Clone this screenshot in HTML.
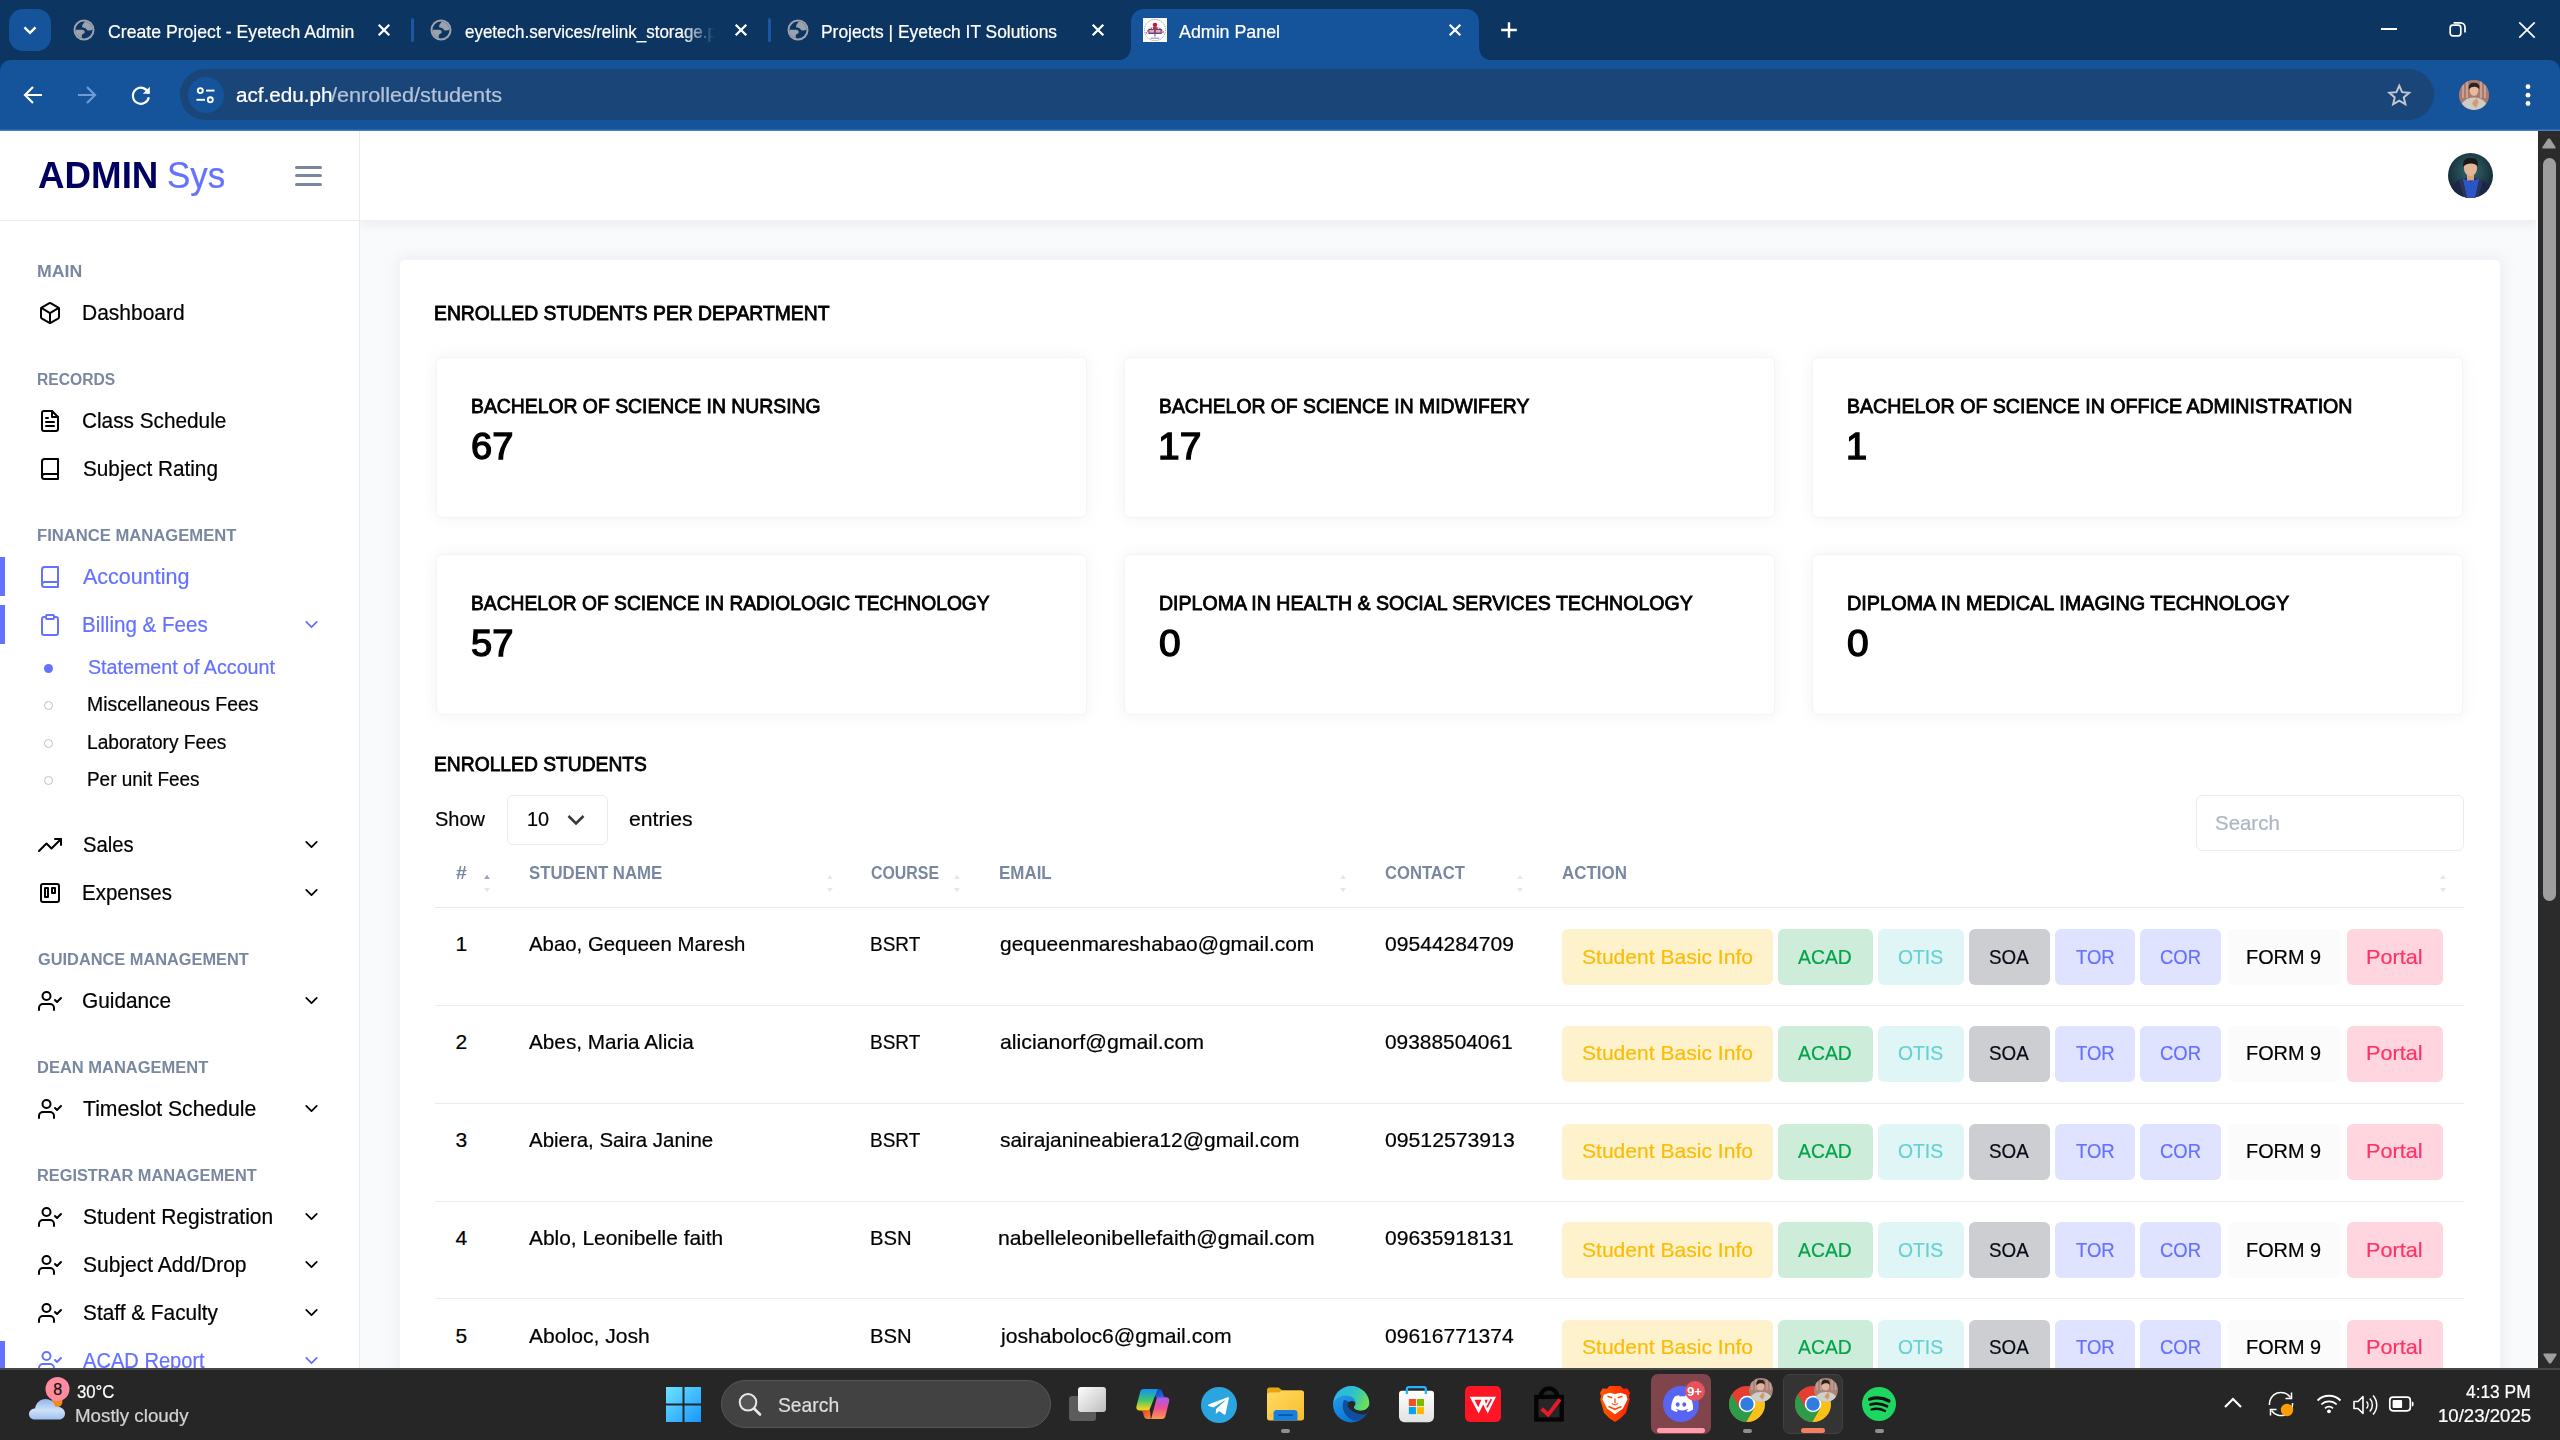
<!DOCTYPE html>
<html lang="en"><head><meta charset="utf-8"><title>Admin Panel</title>
<style>
*{margin:0;padding:0;}
html,body{width:2560px;height:1440px;overflow:hidden;background:#fff;}
body{font-family:"Liberation Sans",sans-serif;position:relative;}
#root{position:absolute;left:0;top:0;width:2560px;height:1440px;overflow:hidden;}
#root div,#root svg,#root span{position:absolute;}
#root section,#root nav,#root header,#root aside,#root footer,#root main{position:absolute;left:0;top:0;width:2560px;height:1440px;pointer-events:none;}
.t{white-space:nowrap;line-height:1;display:block;}
svg{overflow:visible;display:block;}
</style></head>
<body><div id="root">
<main aria-label="page">
<div style="left:360px;top:131px;width:2178px;height:1237px;background:#f9fafb;"></div>
<div style="left:360px;top:131px;width:2178px;height:89px;background:#fff;border-bottom:1px solid #eef0f5;box-shadow:0 3px 10px 0 rgba(183,192,206,.22);"></div>
<svg style="left:2448px;top:153px;" width="45" height="45" viewBox="0 0 45 45" aria-hidden="true"><defs><clipPath id="na"><circle cx="22.500" cy="22.500" r="22.500"/></clipPath><radialGradient id="ng" cx=".5" cy=".4" r=".65"><stop offset="0" stop-color="#356a6c"/><stop offset="1" stop-color="#0d1f2c"/></radialGradient></defs><g clip-path="url(#na)"><rect width="45" height="45" fill="url(#ng)"/><path d="M1 45C2 31 9 25 22.500 25S43 31 44 45Z" fill="#1c2747"/><path d="M14.500 25.500L19 45H27L31.500 25.500L22.500 28.500Z" fill="#2c55c8"/><path d="M14.500 25.500L19 45H16L11 28Z" fill="#2a3558"/><path d="M31.500 25.500L27 45H30L35 28Z" fill="#2a3558"/><rect x="19" y="19" width="7" height="8.500" fill="#d6a288"/><ellipse cx="22.500" cy="15" rx="6.600" ry="8" fill="#e5b59a"/><path d="M15.300 14C14.300 6 19 4.500 23 5.200c4.800-.700 7.700 2.300 6.800 8.800C28.500 10 19 9 15.300 14Z" fill="#19181b"/></g></svg>
<div style="left:398.5px;top:259.2px;width:2102px;height:1200px;background:#fff;border-radius:5px;border:1px solid #f2f4f9;box-shadow:0 0 15px 0 rgba(183,192,206,.25);box-sizing:border-box;"></div>
<span class="t" style="left:434.08px;top:302.00px;font-size:21px;color:#000;transform:scaleX(0.9201);transform-origin:0 50%;-webkit-text-stroke:0.85px #000;">ENROLLED STUDENTS PER DEPARTMENT</span>
<div style="left:435.5px;top:357px;width:651px;height:161.3px;background:#fff;border-radius:6px;border:1px solid #f2f4f9;box-shadow:0 0 15px 0 rgba(183,192,206,.2);box-sizing:border-box;"></div><span class="t" style="left:471.08px;top:395.00px;font-size:21px;color:#000;transform:scaleX(0.9218);transform-origin:0 50%;-webkit-text-stroke:0.85px #000;">BACHELOR OF SCIENCE IN NURSING</span><span class="t" style="left:470.94px;top:429.00px;font-size:36px;color:#000;transform:scaleX(1.0573);transform-origin:0 50%;-webkit-text-stroke:1.3px #000;">67</span>
<div style="left:1123.5px;top:357px;width:651px;height:161.3px;background:#fff;border-radius:6px;border:1px solid #f2f4f9;box-shadow:0 0 15px 0 rgba(183,192,206,.2);box-sizing:border-box;"></div><span class="t" style="left:1159.08px;top:395.00px;font-size:21px;color:#000;transform:scaleX(0.9208);transform-origin:0 50%;-webkit-text-stroke:0.85px #000;">BACHELOR OF SCIENCE IN MIDWIFERY</span><span class="t" style="left:1157.84px;top:429.00px;font-size:36px;color:#000;transform:scaleX(1.0805);transform-origin:0 50%;-webkit-text-stroke:1.3px #000;">17</span>
<div style="left:1811.5px;top:357px;width:651px;height:161.3px;background:#fff;border-radius:6px;border:1px solid #f2f4f9;box-shadow:0 0 15px 0 rgba(183,192,206,.2);box-sizing:border-box;"></div><span class="t" style="left:1847.07px;top:395.00px;font-size:21px;color:#000;transform:scaleX(0.9323);transform-origin:0 50%;-webkit-text-stroke:0.85px #000;">BACHELOR OF SCIENCE IN OFFICE ADMINISTRATION</span><span class="t" style="left:1845.88px;top:429.00px;font-size:36px;color:#000;transform:scaleX(1.0588);transform-origin:0 50%;-webkit-text-stroke:1.3px #000;">1</span>
<div style="left:435.5px;top:554px;width:651px;height:161.3px;background:#fff;border-radius:6px;border:1px solid #f2f4f9;box-shadow:0 0 15px 0 rgba(183,192,206,.2);box-sizing:border-box;"></div><span class="t" style="left:471.08px;top:592.00px;font-size:21px;color:#000;transform:scaleX(0.9151);transform-origin:0 50%;-webkit-text-stroke:0.85px #000;">BACHELOR OF SCIENCE IN RADIOLOGIC TECHNOLOGY</span><span class="t" style="left:470.94px;top:626.00px;font-size:36px;color:#000;transform:scaleX(1.0573);transform-origin:0 50%;-webkit-text-stroke:1.3px #000;">57</span>
<div style="left:1123.5px;top:554px;width:651px;height:161.3px;background:#fff;border-radius:6px;border:1px solid #f2f4f9;box-shadow:0 0 15px 0 rgba(183,192,206,.2);box-sizing:border-box;"></div><span class="t" style="left:1159.07px;top:592.00px;font-size:21px;color:#000;transform:scaleX(0.9309);transform-origin:0 50%;-webkit-text-stroke:0.85px #000;">DIPLOMA IN HEALTH &amp; SOCIAL SERVICES TECHNOLOGY</span><span class="t" style="left:1158.92px;top:626.00px;font-size:36px;color:#000;transform:scaleX(1.0833);transform-origin:0 50%;-webkit-text-stroke:1.3px #000;">0</span>
<div style="left:1811.5px;top:554px;width:651px;height:161.3px;background:#fff;border-radius:6px;border:1px solid #f2f4f9;box-shadow:0 0 15px 0 rgba(183,192,206,.2);box-sizing:border-box;"></div><span class="t" style="left:1847.05px;top:592.00px;font-size:21px;color:#000;transform:scaleX(0.9452);transform-origin:0 50%;-webkit-text-stroke:0.85px #000;">DIPLOMA IN MEDICAL IMAGING TECHNOLOGY</span><span class="t" style="left:1846.92px;top:626.00px;font-size:36px;color:#000;transform:scaleX(1.0833);transform-origin:0 50%;-webkit-text-stroke:1.3px #000;">0</span>
<span class="t" style="left:434.08px;top:753.00px;font-size:21px;color:#000;transform:scaleX(0.9169);transform-origin:0 50%;-webkit-text-stroke:0.85px #000;">ENROLLED STUDENTS</span>
<span class="t" style="left:435.00px;top:808.00px;font-size:21px;color:#000;transform:scaleX(0.9510);transform-origin:0 50%;-webkit-text-stroke:0.22px #000;">Show</span>
<div style="left:507.2px;top:795px;width:100.5px;height:49.8px;background:#fff;border:1px solid #e9ecef;border-radius:6px;box-sizing:border-box;"></div>
<span class="t" style="left:526.55px;top:808.00px;font-size:21px;color:#000;transform:scaleX(0.9456);transform-origin:0 50%;-webkit-text-stroke:0.22px #000;">10</span>
<svg style="left:564px;top:808px;" width="24" height="24" viewBox="0 0 24 24" aria-hidden="true"><path d="M4.500 8L12 15.500L19.500 8" fill="none" stroke="#343a40" stroke-width="2.600"/></svg>
<span class="t" style="left:628.75px;top:808.00px;font-size:21px;color:#000;transform:scaleX(1.0075);transform-origin:0 50%;-webkit-text-stroke:0.22px #000;">entries</span>
<div style="left:2195.5px;top:795.3px;width:268.5px;height:55.3px;background:#fff;border:1px solid #e9ecef;border-radius:6px;box-sizing:border-box;"></div>
<span class="t" style="left:2215.30px;top:812.00px;font-size:21px;color:#aeb6c6;transform:scaleX(0.9733);transform-origin:0 50%;-webkit-text-stroke:0.22px #aeb6c6;">Search</span>
<span class="t" style="left:455.50px;top:864.00px;font-size:18px;color:#7987a1;font-weight:700;transform:scaleX(1.0800);transform-origin:0 50%;">#</span>
<span class="t" style="left:528.75px;top:864.00px;font-size:18px;color:#7987a1;font-weight:700;transform:scaleX(0.9319);transform-origin:0 50%;">STUDENT NAME</span>
<span class="t" style="left:871.25px;top:864.00px;font-size:18px;color:#7987a1;font-weight:700;transform:scaleX(0.8831);transform-origin:0 50%;">COURSE</span>
<span class="t" style="left:998.56px;top:864.00px;font-size:18px;color:#7987a1;font-weight:700;transform:scaleX(0.9409);transform-origin:0 50%;">EMAIL</span>
<span class="t" style="left:1385.00px;top:864.00px;font-size:18px;color:#7987a1;font-weight:700;transform:scaleX(0.9232);transform-origin:0 50%;">CONTACT</span>
<span class="t" style="left:1562.00px;top:864.00px;font-size:18px;color:#7987a1;font-weight:700;transform:scaleX(0.9412);transform-origin:0 50%;">ACTION</span>
<svg style="left:482.75px;top:873px;" width="8" height="22" viewBox="0 0 8 22" aria-hidden="true"><path d="M4 1.800L6.900 6H1.100Z" fill="#9aa5b9"/><path d="M4 19.200L6.900 15H1.100Z" fill="#e3e7ee"/></svg>
<svg style="left:825.5px;top:873px;" width="8" height="22" viewBox="0 0 8 22" aria-hidden="true"><path d="M4 1.800L6.900 6H1.100Z" fill="#e3e7ee"/><path d="M4 19.200L6.900 15H1.100Z" fill="#e3e7ee"/></svg>
<svg style="left:952.75px;top:873px;" width="8" height="22" viewBox="0 0 8 22" aria-hidden="true"><path d="M4 1.800L6.900 6H1.100Z" fill="#e3e7ee"/><path d="M4 19.200L6.900 15H1.100Z" fill="#e3e7ee"/></svg>
<svg style="left:1338.5px;top:873px;" width="8" height="22" viewBox="0 0 8 22" aria-hidden="true"><path d="M4 1.800L6.900 6H1.100Z" fill="#e3e7ee"/><path d="M4 19.200L6.900 15H1.100Z" fill="#e3e7ee"/></svg>
<svg style="left:1515.5px;top:873px;" width="8" height="22" viewBox="0 0 8 22" aria-hidden="true"><path d="M4 1.800L6.900 6H1.100Z" fill="#e3e7ee"/><path d="M4 19.200L6.900 15H1.100Z" fill="#e3e7ee"/></svg>
<svg style="left:2438.8px;top:873px;" width="8" height="22" viewBox="0 0 8 22" aria-hidden="true"><path d="M4 1.800L6.900 6H1.100Z" fill="#e3e7ee"/><path d="M4 19.200L6.900 15H1.100Z" fill="#e3e7ee"/></svg>
<div style="left:435px;top:906.6px;width:2029px;height:1.5px;background:#e6e9ee;"></div>
<span class="t" style="left:455.50px;top:933.00px;font-size:21px;color:#000;-webkit-text-stroke:0.22px #000;">1</span>
<span class="t" style="left:528.75px;top:933.00px;font-size:21px;color:#000;transform:scaleX(0.9705);transform-origin:0 50%;-webkit-text-stroke:0.22px #000;">Abao, Gequeen Maresh</span>
<span class="t" style="left:870.35px;top:933.00px;font-size:21px;color:#000;transform:scaleX(0.9033);transform-origin:0 50%;-webkit-text-stroke:0.22px #000;">BSRT</span>
<span class="t" style="left:999.50px;top:933.00px;font-size:21px;color:#000;transform:scaleX(0.9960);transform-origin:0 50%;-webkit-text-stroke:0.22px #000;">gequeenmareshabao@gmail.com</span>
<span class="t" style="left:1385.00px;top:933.00px;font-size:21px;color:#000;transform:scaleX(1.0036);transform-origin:0 50%;-webkit-text-stroke:0.22px #000;">09544284709</span>
<div style="left:1562px;top:929.2px;width:210.8px;height:55.5px;background:#fef2cd;border-radius:6px;"></div>
<span class="t" style="left:1581.60px;top:946.00px;font-size:21px;color:#fbbc06;transform:scaleX(1.0032);transform-origin:0 50%;-webkit-text-stroke:0.22px #fbbc06;">Student Basic Info</span>
<div style="left:1778px;top:929.2px;width:94.7px;height:55.5px;background:#cdedda;border-radius:6px;"></div>
<span class="t" style="left:1798.40px;top:946.00px;font-size:21px;color:#05a34a;transform:scaleX(0.9213);transform-origin:0 50%;-webkit-text-stroke:0.22px #05a34a;">ACAD</span>
<div style="left:1878px;top:929.2px;width:85.7px;height:55.5px;background:#e0f6f6;border-radius:6px;"></div>
<span class="t" style="left:1898.08px;top:946.00px;font-size:21px;color:#66d1d1;transform:scaleX(0.9209);transform-origin:0 50%;-webkit-text-stroke:0.22px #66d1d1;">OTIS</span>
<div style="left:1969px;top:929.2px;width:80.9px;height:55.5px;background:#cdced1;border-radius:6px;"></div>
<span class="t" style="left:1989.30px;top:946.00px;font-size:21px;color:#060c17;transform:scaleX(0.8953);transform-origin:0 50%;-webkit-text-stroke:0.22px #060c17;">SOA</span>
<div style="left:2055px;top:929.2px;width:80px;height:55.5px;background:#e0e3ff;border-radius:6px;"></div>
<span class="t" style="left:2075.70px;top:946.00px;font-size:21px;color:#6571ff;transform:scaleX(0.8816);transform-origin:0 50%;-webkit-text-stroke:0.22px #6571ff;">TOR</span>
<div style="left:2140px;top:929.2px;width:81px;height:55.5px;background:#e0e3ff;border-radius:6px;"></div>
<span class="t" style="left:2160.12px;top:946.00px;font-size:21px;color:#6571ff;transform:scaleX(0.8791);transform-origin:0 50%;-webkit-text-stroke:0.22px #6571ff;">COR</span>
<div style="left:2226.6px;top:929.2px;width:114.6px;height:55.5px;background:#fbfbfc;border-radius:6px;"></div>
<span class="t" style="left:2246.05px;top:946.00px;font-size:21px;color:#000;transform:scaleX(0.9465);transform-origin:0 50%;-webkit-text-stroke:0.22px #000;">FORM 9</span>
<div style="left:2346.9px;top:929.2px;width:96.1px;height:55.5px;background:#ffd6e0;border-radius:6px;"></div>
<span class="t" style="left:2366.17px;top:946.00px;font-size:21px;color:#ff3366;transform:scaleX(1.0302);transform-origin:0 50%;-webkit-text-stroke:0.22px #ff3366;">Portal</span>
<div style="left:435px;top:1004.8px;width:2029px;height:1.3px;background:#e9ecef;"></div>
<span class="t" style="left:455.50px;top:1031.00px;font-size:21px;color:#000;-webkit-text-stroke:0.22px #000;">2</span>
<span class="t" style="left:528.75px;top:1031.00px;font-size:21px;color:#000;transform:scaleX(0.9873);transform-origin:0 50%;-webkit-text-stroke:0.22px #000;">Abes, Maria Alicia</span>
<span class="t" style="left:870.35px;top:1031.00px;font-size:21px;color:#000;transform:scaleX(0.9033);transform-origin:0 50%;-webkit-text-stroke:0.22px #000;">BSRT</span>
<span class="t" style="left:999.50px;top:1031.00px;font-size:21px;color:#000;transform:scaleX(1.0147);transform-origin:0 50%;-webkit-text-stroke:0.22px #000;">alicianorf@gmail.com</span>
<span class="t" style="left:1385.00px;top:1031.00px;font-size:21px;color:#000;transform:scaleX(0.9938);transform-origin:0 50%;-webkit-text-stroke:0.22px #000;">09388504061</span>
<div style="left:1562px;top:1026.1px;width:210.8px;height:55.5px;background:#fef2cd;border-radius:6px;"></div>
<span class="t" style="left:1581.60px;top:1042.00px;font-size:21px;color:#fbbc06;transform:scaleX(1.0032);transform-origin:0 50%;-webkit-text-stroke:0.22px #fbbc06;">Student Basic Info</span>
<div style="left:1778px;top:1026.1px;width:94.7px;height:55.5px;background:#cdedda;border-radius:6px;"></div>
<span class="t" style="left:1798.40px;top:1042.00px;font-size:21px;color:#05a34a;transform:scaleX(0.9213);transform-origin:0 50%;-webkit-text-stroke:0.22px #05a34a;">ACAD</span>
<div style="left:1878px;top:1026.1px;width:85.7px;height:55.5px;background:#e0f6f6;border-radius:6px;"></div>
<span class="t" style="left:1898.08px;top:1042.00px;font-size:21px;color:#66d1d1;transform:scaleX(0.9209);transform-origin:0 50%;-webkit-text-stroke:0.22px #66d1d1;">OTIS</span>
<div style="left:1969px;top:1026.1px;width:80.9px;height:55.5px;background:#cdced1;border-radius:6px;"></div>
<span class="t" style="left:1989.30px;top:1042.00px;font-size:21px;color:#060c17;transform:scaleX(0.8953);transform-origin:0 50%;-webkit-text-stroke:0.22px #060c17;">SOA</span>
<div style="left:2055px;top:1026.1px;width:80px;height:55.5px;background:#e0e3ff;border-radius:6px;"></div>
<span class="t" style="left:2075.70px;top:1042.00px;font-size:21px;color:#6571ff;transform:scaleX(0.8816);transform-origin:0 50%;-webkit-text-stroke:0.22px #6571ff;">TOR</span>
<div style="left:2140px;top:1026.1px;width:81px;height:55.5px;background:#e0e3ff;border-radius:6px;"></div>
<span class="t" style="left:2160.12px;top:1042.00px;font-size:21px;color:#6571ff;transform:scaleX(0.8791);transform-origin:0 50%;-webkit-text-stroke:0.22px #6571ff;">COR</span>
<div style="left:2226.6px;top:1026.1px;width:114.6px;height:55.5px;background:#fbfbfc;border-radius:6px;"></div>
<span class="t" style="left:2246.05px;top:1042.00px;font-size:21px;color:#000;transform:scaleX(0.9465);transform-origin:0 50%;-webkit-text-stroke:0.22px #000;">FORM 9</span>
<div style="left:2346.9px;top:1026.1px;width:96.1px;height:55.5px;background:#ffd6e0;border-radius:6px;"></div>
<span class="t" style="left:2366.17px;top:1042.00px;font-size:21px;color:#ff3366;transform:scaleX(1.0302);transform-origin:0 50%;-webkit-text-stroke:0.22px #ff3366;">Portal</span>
<div style="left:435px;top:1102.6px;width:2029px;height:1.3px;background:#e9ecef;"></div>
<span class="t" style="left:455.50px;top:1129.00px;font-size:21px;color:#000;-webkit-text-stroke:0.22px #000;">3</span>
<span class="t" style="left:528.75px;top:1129.00px;font-size:21px;color:#000;transform:scaleX(0.9736);transform-origin:0 50%;-webkit-text-stroke:0.22px #000;">Abiera, Saira Janine</span>
<span class="t" style="left:870.35px;top:1129.00px;font-size:21px;color:#000;transform:scaleX(0.9033);transform-origin:0 50%;-webkit-text-stroke:0.22px #000;">BSRT</span>
<span class="t" style="left:999.50px;top:1129.00px;font-size:21px;color:#000;transform:scaleX(0.9970);transform-origin:0 50%;-webkit-text-stroke:0.22px #000;">sairajanineabiera12@gmail.com</span>
<span class="t" style="left:1385.00px;top:1129.00px;font-size:21px;color:#000;transform:scaleX(1.0095);transform-origin:0 50%;-webkit-text-stroke:0.22px #000;">09512573913</span>
<div style="left:1562px;top:1124.1px;width:210.8px;height:55.5px;background:#fef2cd;border-radius:6px;"></div>
<span class="t" style="left:1581.60px;top:1140.00px;font-size:21px;color:#fbbc06;transform:scaleX(1.0032);transform-origin:0 50%;-webkit-text-stroke:0.22px #fbbc06;">Student Basic Info</span>
<div style="left:1778px;top:1124.1px;width:94.7px;height:55.5px;background:#cdedda;border-radius:6px;"></div>
<span class="t" style="left:1798.40px;top:1140.00px;font-size:21px;color:#05a34a;transform:scaleX(0.9213);transform-origin:0 50%;-webkit-text-stroke:0.22px #05a34a;">ACAD</span>
<div style="left:1878px;top:1124.1px;width:85.7px;height:55.5px;background:#e0f6f6;border-radius:6px;"></div>
<span class="t" style="left:1898.08px;top:1140.00px;font-size:21px;color:#66d1d1;transform:scaleX(0.9209);transform-origin:0 50%;-webkit-text-stroke:0.22px #66d1d1;">OTIS</span>
<div style="left:1969px;top:1124.1px;width:80.9px;height:55.5px;background:#cdced1;border-radius:6px;"></div>
<span class="t" style="left:1989.30px;top:1140.00px;font-size:21px;color:#060c17;transform:scaleX(0.8953);transform-origin:0 50%;-webkit-text-stroke:0.22px #060c17;">SOA</span>
<div style="left:2055px;top:1124.1px;width:80px;height:55.5px;background:#e0e3ff;border-radius:6px;"></div>
<span class="t" style="left:2075.70px;top:1140.00px;font-size:21px;color:#6571ff;transform:scaleX(0.8816);transform-origin:0 50%;-webkit-text-stroke:0.22px #6571ff;">TOR</span>
<div style="left:2140px;top:1124.1px;width:81px;height:55.5px;background:#e0e3ff;border-radius:6px;"></div>
<span class="t" style="left:2160.12px;top:1140.00px;font-size:21px;color:#6571ff;transform:scaleX(0.8791);transform-origin:0 50%;-webkit-text-stroke:0.22px #6571ff;">COR</span>
<div style="left:2226.6px;top:1124.1px;width:114.6px;height:55.5px;background:#fbfbfc;border-radius:6px;"></div>
<span class="t" style="left:2246.05px;top:1140.00px;font-size:21px;color:#000;transform:scaleX(0.9465);transform-origin:0 50%;-webkit-text-stroke:0.22px #000;">FORM 9</span>
<div style="left:2346.9px;top:1124.1px;width:96.1px;height:55.5px;background:#ffd6e0;border-radius:6px;"></div>
<span class="t" style="left:2366.17px;top:1140.00px;font-size:21px;color:#ff3366;transform:scaleX(1.0302);transform-origin:0 50%;-webkit-text-stroke:0.22px #ff3366;">Portal</span>
<div style="left:435px;top:1200.7px;width:2029px;height:1.3px;background:#e9ecef;"></div>
<span class="t" style="left:455.50px;top:1227.00px;font-size:21px;color:#000;-webkit-text-stroke:0.22px #000;">4</span>
<span class="t" style="left:528.75px;top:1227.00px;font-size:21px;color:#000;transform:scaleX(0.9959);transform-origin:0 50%;-webkit-text-stroke:0.22px #000;">Ablo, Leonibelle faith</span>
<span class="t" style="left:870.29px;top:1227.00px;font-size:21px;color:#000;transform:scaleX(0.9643);transform-origin:0 50%;-webkit-text-stroke:0.22px #000;">BSN</span>
<span class="t" style="left:998.49px;top:1227.00px;font-size:21px;color:#000;transform:scaleX(1.0110);transform-origin:0 50%;-webkit-text-stroke:0.22px #000;">nabelleleonibellefaith@gmail.com</span>
<span class="t" style="left:1385.00px;top:1227.00px;font-size:21px;color:#000;transform:scaleX(1.0016);transform-origin:0 50%;-webkit-text-stroke:0.22px #000;">09635918131</span>
<div style="left:1562px;top:1222.2px;width:210.8px;height:55.5px;background:#fef2cd;border-radius:6px;"></div>
<span class="t" style="left:1581.60px;top:1239.00px;font-size:21px;color:#fbbc06;transform:scaleX(1.0032);transform-origin:0 50%;-webkit-text-stroke:0.22px #fbbc06;">Student Basic Info</span>
<div style="left:1778px;top:1222.2px;width:94.7px;height:55.5px;background:#cdedda;border-radius:6px;"></div>
<span class="t" style="left:1798.40px;top:1239.00px;font-size:21px;color:#05a34a;transform:scaleX(0.9213);transform-origin:0 50%;-webkit-text-stroke:0.22px #05a34a;">ACAD</span>
<div style="left:1878px;top:1222.2px;width:85.7px;height:55.5px;background:#e0f6f6;border-radius:6px;"></div>
<span class="t" style="left:1898.08px;top:1239.00px;font-size:21px;color:#66d1d1;transform:scaleX(0.9209);transform-origin:0 50%;-webkit-text-stroke:0.22px #66d1d1;">OTIS</span>
<div style="left:1969px;top:1222.2px;width:80.9px;height:55.5px;background:#cdced1;border-radius:6px;"></div>
<span class="t" style="left:1989.30px;top:1239.00px;font-size:21px;color:#060c17;transform:scaleX(0.8953);transform-origin:0 50%;-webkit-text-stroke:0.22px #060c17;">SOA</span>
<div style="left:2055px;top:1222.2px;width:80px;height:55.5px;background:#e0e3ff;border-radius:6px;"></div>
<span class="t" style="left:2075.70px;top:1239.00px;font-size:21px;color:#6571ff;transform:scaleX(0.8816);transform-origin:0 50%;-webkit-text-stroke:0.22px #6571ff;">TOR</span>
<div style="left:2140px;top:1222.2px;width:81px;height:55.5px;background:#e0e3ff;border-radius:6px;"></div>
<span class="t" style="left:2160.12px;top:1239.00px;font-size:21px;color:#6571ff;transform:scaleX(0.8791);transform-origin:0 50%;-webkit-text-stroke:0.22px #6571ff;">COR</span>
<div style="left:2226.6px;top:1222.2px;width:114.6px;height:55.5px;background:#fbfbfc;border-radius:6px;"></div>
<span class="t" style="left:2246.05px;top:1239.00px;font-size:21px;color:#000;transform:scaleX(0.9465);transform-origin:0 50%;-webkit-text-stroke:0.22px #000;">FORM 9</span>
<div style="left:2346.9px;top:1222.2px;width:96.1px;height:55.5px;background:#ffd6e0;border-radius:6px;"></div>
<span class="t" style="left:2366.17px;top:1239.00px;font-size:21px;color:#ff3366;transform:scaleX(1.0302);transform-origin:0 50%;-webkit-text-stroke:0.22px #ff3366;">Portal</span>
<div style="left:435px;top:1298.0px;width:2029px;height:1.3px;background:#e9ecef;"></div>
<span class="t" style="left:455.50px;top:1325.00px;font-size:21px;color:#000;-webkit-text-stroke:0.22px #000;">5</span>
<span class="t" style="left:528.75px;top:1325.00px;font-size:21px;color:#000;transform:scaleX(1.0037);transform-origin:0 50%;-webkit-text-stroke:0.22px #000;">Aboloc, Josh</span>
<span class="t" style="left:870.29px;top:1325.00px;font-size:21px;color:#000;transform:scaleX(0.9643);transform-origin:0 50%;-webkit-text-stroke:0.22px #000;">BSN</span>
<span class="t" style="left:1000.51px;top:1325.00px;font-size:21px;color:#000;transform:scaleX(1.0065);transform-origin:0 50%;-webkit-text-stroke:0.22px #000;">joshaboloc6@gmail.com</span>
<span class="t" style="left:1385.00px;top:1325.00px;font-size:21px;color:#000;transform:scaleX(1.0016);transform-origin:0 50%;-webkit-text-stroke:0.22px #000;">09616771374</span>
<div style="left:1562px;top:1320.1px;width:210.8px;height:55.5px;background:#fef2cd;border-radius:6px;"></div>
<span class="t" style="left:1581.60px;top:1336.00px;font-size:21px;color:#fbbc06;transform:scaleX(1.0032);transform-origin:0 50%;-webkit-text-stroke:0.22px #fbbc06;">Student Basic Info</span>
<div style="left:1778px;top:1320.1px;width:94.7px;height:55.5px;background:#cdedda;border-radius:6px;"></div>
<span class="t" style="left:1798.40px;top:1336.00px;font-size:21px;color:#05a34a;transform:scaleX(0.9213);transform-origin:0 50%;-webkit-text-stroke:0.22px #05a34a;">ACAD</span>
<div style="left:1878px;top:1320.1px;width:85.7px;height:55.5px;background:#e0f6f6;border-radius:6px;"></div>
<span class="t" style="left:1898.08px;top:1336.00px;font-size:21px;color:#66d1d1;transform:scaleX(0.9209);transform-origin:0 50%;-webkit-text-stroke:0.22px #66d1d1;">OTIS</span>
<div style="left:1969px;top:1320.1px;width:80.9px;height:55.5px;background:#cdced1;border-radius:6px;"></div>
<span class="t" style="left:1989.30px;top:1336.00px;font-size:21px;color:#060c17;transform:scaleX(0.8953);transform-origin:0 50%;-webkit-text-stroke:0.22px #060c17;">SOA</span>
<div style="left:2055px;top:1320.1px;width:80px;height:55.5px;background:#e0e3ff;border-radius:6px;"></div>
<span class="t" style="left:2075.70px;top:1336.00px;font-size:21px;color:#6571ff;transform:scaleX(0.8816);transform-origin:0 50%;-webkit-text-stroke:0.22px #6571ff;">TOR</span>
<div style="left:2140px;top:1320.1px;width:81px;height:55.5px;background:#e0e3ff;border-radius:6px;"></div>
<span class="t" style="left:2160.12px;top:1336.00px;font-size:21px;color:#6571ff;transform:scaleX(0.8791);transform-origin:0 50%;-webkit-text-stroke:0.22px #6571ff;">COR</span>
<div style="left:2226.6px;top:1320.1px;width:114.6px;height:55.5px;background:#fbfbfc;border-radius:6px;"></div>
<span class="t" style="left:2246.05px;top:1336.00px;font-size:21px;color:#000;transform:scaleX(0.9465);transform-origin:0 50%;-webkit-text-stroke:0.22px #000;">FORM 9</span>
<div style="left:2346.9px;top:1320.1px;width:96.1px;height:55.5px;background:#ffd6e0;border-radius:6px;"></div>
<span class="t" style="left:2366.17px;top:1336.00px;font-size:21px;color:#ff3366;transform:scaleX(1.0302);transform-origin:0 50%;-webkit-text-stroke:0.22px #ff3366;">Portal</span>
</main>
<aside aria-label="sidebar">
<div style="left:0px;top:131px;width:359px;height:1237px;background:#fff;border-right:1px solid #e9ecef;"></div>
<div style="left:0px;top:220px;width:359px;height:1px;background:#e9ecef;"></div>
<span class="t" style="left:37.50px;top:158.00px;font-size:36.5px;color:#01005f;font-weight:700;transform:scaleX(1.0063);transform-origin:0 50%;">ADMIN</span>
<span class="t" style="left:167.04px;top:158.00px;font-size:36.5px;color:#6571ff;transform:scaleX(0.9591);transform-origin:0 50%;-webkit-text-stroke:0.22px #6571ff;">Sys</span>
<div style="left:295px;top:165.5px;width:27px;height:3px;background:#7987a1;border-radius:2px;"></div>
<div style="left:295px;top:174.3px;width:27px;height:3px;background:#7987a1;border-radius:2px;"></div>
<div style="left:295px;top:183px;width:27px;height:3px;background:#7987a1;border-radius:2px;"></div>
<span class="t" style="left:36.89px;top:264.00px;font-size:16px;color:#7987a1;font-weight:700;transform:scaleX(1.1061);transform-origin:0 50%;">MAIN</span>
<svg style="left:37.5px;top:301px;" width="24" height="24" viewBox="0 0 24 24" aria-hidden="true"><g fill="none" stroke="#000" stroke-width="2" stroke-linecap="round" stroke-linejoin="round"><path d="M21 16V8a2 2 0 0 0-1-1.730l-7-4a2 2 0 0 0-2 0l-7 4A2 2 0 0 0 3 8v8a2 2 0 0 0 1 1.730l7 4a2 2 0 0 0 2 0l7-4A2 2 0 0 0 21 16z"/><polyline points="3.270 6.960 12 12.010 20.730 6.960"/><line x1="12" y1="22.080" x2="12" y2="12"/></g></svg><span class="t" style="left:81.82px;top:303.00px;font-size:21.5px;color:#000;transform:scaleX(0.9765);transform-origin:0 50%;-webkit-text-stroke:0.22px #000;">Dashboard</span>
<span class="t" style="left:37.02px;top:372.00px;font-size:16px;color:#7987a1;font-weight:700;transform:scaleX(0.9769);transform-origin:0 50%;">RECORDS</span>
<svg style="left:37.5px;top:409px;" width="24" height="24" viewBox="0 0 24 24" aria-hidden="true"><g fill="none" stroke="#000" stroke-width="2" stroke-linecap="round" stroke-linejoin="round"><path d="M14 2H6a2 2 0 0 0-2 2v16a2 2 0 0 0 2 2h12a2 2 0 0 0 2-2V8z"/><polyline points="14 2 14 8 20 8"/><line x1="16" y1="13" x2="8" y2="13"/><line x1="16" y1="17" x2="8" y2="17"/><polyline points="10 9 9 9 8 9"/></g></svg><span class="t" style="left:81.83px;top:411.00px;font-size:21.5px;color:#000;transform:scaleX(0.9659);transform-origin:0 50%;-webkit-text-stroke:0.22px #000;">Class Schedule</span>
<svg style="left:37.5px;top:457px;" width="24" height="24" viewBox="0 0 24 24" aria-hidden="true"><g fill="none" stroke="#000" stroke-width="2" stroke-linecap="round" stroke-linejoin="round"><path d="M4 19.500A2.500 2.500 0 0 1 6.500 17H20"/><path d="M6.500 2H20v20H6.500A2.500 2.500 0 0 1 4 19.500v-15A2.500 2.500 0 0 1 6.500 2z"/></g></svg><span class="t" style="left:82.80px;top:459.00px;font-size:21.5px;color:#000;transform:scaleX(0.9649);transform-origin:0 50%;-webkit-text-stroke:0.22px #000;">Subject Rating</span>
<span class="t" style="left:36.96px;top:528.00px;font-size:16px;color:#7987a1;font-weight:700;transform:scaleX(1.0386);transform-origin:0 50%;">FINANCE MANAGEMENT</span>
<div style="left:0px;top:556.7px;width:5px;height:39px;background:#6571ff;"></div><svg style="left:37.5px;top:565px;" width="24" height="24" viewBox="0 0 24 24" aria-hidden="true"><g fill="none" stroke="#6571ff" stroke-width="2" stroke-linecap="round" stroke-linejoin="round"><path d="M4 19.500A2.500 2.500 0 0 1 6.500 17H20"/><path d="M6.500 2H20v20H6.500A2.500 2.500 0 0 1 4 19.500v-15A2.500 2.500 0 0 1 6.500 2z"/></g></svg><span class="t" style="left:82.80px;top:567.00px;font-size:21.5px;color:#6571ff;transform:scaleX(1.0008);transform-origin:0 50%;-webkit-text-stroke:0.22px #6571ff;">Accounting</span>
<div style="left:0px;top:604.7px;width:5px;height:39px;background:#6571ff;"></div><svg style="left:37.5px;top:613px;" width="24" height="24" viewBox="0 0 24 24" aria-hidden="true"><g fill="none" stroke="#6571ff" stroke-width="2" stroke-linecap="round" stroke-linejoin="round"><path d="M16 4h2a2 2 0 0 1 2 2v14a2 2 0 0 1-2 2H6a2 2 0 0 1-2-2V6a2 2 0 0 1 2-2h2"/><rect x="8" y="2" width="8" height="4" rx="1" ry="1"/></g></svg><span class="t" style="left:81.84px;top:615.00px;font-size:21.5px;color:#6571ff;transform:scaleX(0.9561);transform-origin:0 50%;-webkit-text-stroke:0.22px #6571ff;">Billing &amp; Fees</span><svg style="left:300.5px;top:613.8px;" width="21" height="21" viewBox="0 0 24 24" aria-hidden="true"><g fill="none" stroke="#6571ff" stroke-width="2" stroke-linecap="round" stroke-linejoin="round"><polyline points="6 9 12 15 18 9"/></g></svg>
<div style="left:44px;top:664px;width:9px;height:9px;background:#6571ff;border-radius:50%;"></div><span class="t" style="left:87.50px;top:658.00px;font-size:19.5px;color:#6571ff;transform:scaleX(1.0084);transform-origin:0 50%;-webkit-text-stroke:0.22px #6571ff;">Statement of Account</span>
<div style="left:44px;top:700.8px;width:9px;height:9px;background:#fff;border-radius:50%;border:1.500px solid #b8c0cf;box-sizing:border-box;"></div><span class="t" style="left:86.51px;top:695.00px;font-size:19.5px;color:#000;transform:scaleX(0.9949);transform-origin:0 50%;-webkit-text-stroke:0.22px #000;">Miscellaneous Fees</span>
<div style="left:44px;top:738.8px;width:9px;height:9px;background:#fff;border-radius:50%;border:1.500px solid #b8c0cf;box-sizing:border-box;"></div><span class="t" style="left:86.52px;top:733.00px;font-size:19.5px;color:#000;transform:scaleX(0.9813);transform-origin:0 50%;-webkit-text-stroke:0.22px #000;">Laboratory Fees</span>
<div style="left:44px;top:775.8px;width:9px;height:9px;background:#fff;border-radius:50%;border:1.500px solid #b8c0cf;box-sizing:border-box;"></div><span class="t" style="left:86.53px;top:770.00px;font-size:19.5px;color:#000;transform:scaleX(0.9703);transform-origin:0 50%;-webkit-text-stroke:0.22px #000;">Per unit Fees</span>
<svg style="left:37.5px;top:833px;" width="24" height="24" viewBox="0 0 24 24" aria-hidden="true"><g fill="none" stroke="#000" stroke-width="2" stroke-linecap="round" stroke-linejoin="round"><polyline points="23 6 13.500 15.500 8.500 10.500 1 18"/><polyline points="17 6 23 6 23 12"/></g></svg><span class="t" style="left:82.80px;top:835.00px;font-size:21.5px;color:#000;transform:scaleX(0.9428);transform-origin:0 50%;-webkit-text-stroke:0.22px #000;">Sales</span><svg style="left:300.5px;top:833.8px;" width="21" height="21" viewBox="0 0 24 24" aria-hidden="true"><g fill="none" stroke="#000" stroke-width="2" stroke-linecap="round" stroke-linejoin="round"><polyline points="6 9 12 15 18 9"/></g></svg>
<svg style="left:37.5px;top:881px;" width="24" height="24" viewBox="0 0 24 24" aria-hidden="true"><g fill="none" stroke="#000" stroke-width="2" stroke-linecap="round" stroke-linejoin="round"><rect x="3" y="3" width="18" height="18" rx="2" ry="2"/><rect x="7" y="7" width="3" height="9"/><rect x="14" y="7" width="3" height="5"/></g></svg><span class="t" style="left:81.85px;top:883.00px;font-size:21.5px;color:#000;transform:scaleX(0.9528);transform-origin:0 50%;-webkit-text-stroke:0.22px #000;">Expenses</span><svg style="left:300.5px;top:881.8px;" width="21" height="21" viewBox="0 0 24 24" aria-hidden="true"><g fill="none" stroke="#000" stroke-width="2" stroke-linecap="round" stroke-linejoin="round"><polyline points="6 9 12 15 18 9"/></g></svg>
<span class="t" style="left:38.00px;top:952.00px;font-size:16px;color:#7987a1;font-weight:700;transform:scaleX(1.0221);transform-origin:0 50%;">GUIDANCE MANAGEMENT</span>
<svg style="left:37.5px;top:989px;" width="24" height="24" viewBox="0 0 24 24" aria-hidden="true"><g fill="none" stroke="#000" stroke-width="2" stroke-linecap="round" stroke-linejoin="round"><path d="M16 21v-2a4 4 0 0 0-4-4H5a4 4 0 0 0-4 4v2"/><circle cx="8.500" cy="7" r="4"/><polyline points="17 11 19 13 23 9"/></g></svg><span class="t" style="left:81.83px;top:991.00px;font-size:21.5px;color:#000;transform:scaleX(0.9680);transform-origin:0 50%;-webkit-text-stroke:0.22px #000;">Guidance</span><svg style="left:300.5px;top:989.8px;" width="21" height="21" viewBox="0 0 24 24" aria-hidden="true"><g fill="none" stroke="#000" stroke-width="2" stroke-linecap="round" stroke-linejoin="round"><polyline points="6 9 12 15 18 9"/></g></svg>
<span class="t" style="left:36.97px;top:1060.00px;font-size:16px;color:#7987a1;font-weight:700;transform:scaleX(1.0306);transform-origin:0 50%;">DEAN MANAGEMENT</span>
<svg style="left:37.5px;top:1097px;" width="24" height="24" viewBox="0 0 24 24" aria-hidden="true"><g fill="none" stroke="#000" stroke-width="2" stroke-linecap="round" stroke-linejoin="round"><path d="M16 21v-2a4 4 0 0 0-4-4H5a4 4 0 0 0-4 4v2"/><circle cx="8.500" cy="7" r="4"/><polyline points="17 11 19 13 23 9"/></g></svg><span class="t" style="left:82.80px;top:1099.00px;font-size:21.5px;color:#000;transform:scaleX(0.9834);transform-origin:0 50%;-webkit-text-stroke:0.22px #000;">Timeslot Schedule</span><svg style="left:300.5px;top:1097.8px;" width="21" height="21" viewBox="0 0 24 24" aria-hidden="true"><g fill="none" stroke="#000" stroke-width="2" stroke-linecap="round" stroke-linejoin="round"><polyline points="6 9 12 15 18 9"/></g></svg>
<span class="t" style="left:36.98px;top:1168.00px;font-size:16px;color:#7987a1;font-weight:700;transform:scaleX(1.0218);transform-origin:0 50%;">REGISTRAR MANAGEMENT</span>
<svg style="left:37.5px;top:1205px;" width="24" height="24" viewBox="0 0 24 24" aria-hidden="true"><g fill="none" stroke="#000" stroke-width="2" stroke-linecap="round" stroke-linejoin="round"><path d="M16 21v-2a4 4 0 0 0-4-4H5a4 4 0 0 0-4 4v2"/><circle cx="8.500" cy="7" r="4"/><polyline points="17 11 19 13 23 9"/></g></svg><span class="t" style="left:82.80px;top:1207.00px;font-size:21.5px;color:#000;transform:scaleX(0.9760);transform-origin:0 50%;-webkit-text-stroke:0.22px #000;">Student Registration</span><svg style="left:300.5px;top:1205.8px;" width="21" height="21" viewBox="0 0 24 24" aria-hidden="true"><g fill="none" stroke="#000" stroke-width="2" stroke-linecap="round" stroke-linejoin="round"><polyline points="6 9 12 15 18 9"/></g></svg>
<svg style="left:37.5px;top:1253px;" width="24" height="24" viewBox="0 0 24 24" aria-hidden="true"><g fill="none" stroke="#000" stroke-width="2" stroke-linecap="round" stroke-linejoin="round"><path d="M16 21v-2a4 4 0 0 0-4-4H5a4 4 0 0 0-4 4v2"/><circle cx="8.500" cy="7" r="4"/><polyline points="17 11 19 13 23 9"/></g></svg><span class="t" style="left:82.80px;top:1255.00px;font-size:21.5px;color:#000;transform:scaleX(0.9771);transform-origin:0 50%;-webkit-text-stroke:0.22px #000;">Subject Add/Drop</span><svg style="left:300.5px;top:1253.8px;" width="21" height="21" viewBox="0 0 24 24" aria-hidden="true"><g fill="none" stroke="#000" stroke-width="2" stroke-linecap="round" stroke-linejoin="round"><polyline points="6 9 12 15 18 9"/></g></svg>
<svg style="left:37.5px;top:1301px;" width="24" height="24" viewBox="0 0 24 24" aria-hidden="true"><g fill="none" stroke="#000" stroke-width="2" stroke-linecap="round" stroke-linejoin="round"><path d="M16 21v-2a4 4 0 0 0-4-4H5a4 4 0 0 0-4 4v2"/><circle cx="8.500" cy="7" r="4"/><polyline points="17 11 19 13 23 9"/></g></svg><span class="t" style="left:82.80px;top:1303.00px;font-size:21.5px;color:#000;transform:scaleX(0.9680);transform-origin:0 50%;-webkit-text-stroke:0.22px #000;">Staff &amp; Faculty</span><svg style="left:300.5px;top:1301.8px;" width="21" height="21" viewBox="0 0 24 24" aria-hidden="true"><g fill="none" stroke="#000" stroke-width="2" stroke-linecap="round" stroke-linejoin="round"><polyline points="6 9 12 15 18 9"/></g></svg>
<div style="left:0px;top:1340.7px;width:5px;height:39px;background:#6571ff;"></div><svg style="left:37.5px;top:1349px;" width="24" height="24" viewBox="0 0 24 24" aria-hidden="true"><g fill="none" stroke="#6571ff" stroke-width="2" stroke-linecap="round" stroke-linejoin="round"><path d="M16 21v-2a4 4 0 0 0-4-4H5a4 4 0 0 0-4 4v2"/><circle cx="8.500" cy="7" r="4"/><polyline points="17 11 19 13 23 9"/></g></svg><span class="t" style="left:82.80px;top:1351.00px;font-size:21.5px;color:#6571ff;transform:scaleX(0.9342);transform-origin:0 50%;-webkit-text-stroke:0.22px #6571ff;">ACAD Report</span><svg style="left:300.5px;top:1349.8px;" width="21" height="21" viewBox="0 0 24 24" aria-hidden="true"><g fill="none" stroke="#6571ff" stroke-width="2" stroke-linecap="round" stroke-linejoin="round"><polyline points="6 9 12 15 18 9"/></g></svg>
</aside>
<section aria-label="scrollbar">
<div style="left:2536px;top:131px;width:2px;height:1237px;background:#fdfdfe;"></div>
<div style="left:2538px;top:131px;width:22px;height:1237px;background:#2b2b2b;"></div>
<svg style="left:2541px;top:136px;" width="16" height="14" viewBox="0 0 16 14" aria-hidden="true"><path d="M8 2.500C8.800 2.500 9.300 3 9.800 3.800L14.500 11c.5.800 0 1.500-.9 1.500H2.400c-.9 0-1.400-.7-.9-1.500L6.200 3.800C6.700 3 7.200 2.500 8 2.500Z" fill="#9f9f9f"/></svg>
<div style="left:2542.8px;top:158px;width:13.4px;height:743px;background:#9f9f9f;border-radius:7px;"></div>
<svg style="left:2541.5px;top:1351.7px;" width="16" height="14" viewBox="0 0 16 14" aria-hidden="true"><path d="M8 11.500C7.200 11.500 6.700 11 6.200 10.200L1.500 3c-.5-.8 0-1.500.9-1.500h11.200c.9 0 1.400.7.9 1.500L9.800 10.200C9.300 11 8.800 11.500 8 11.500Z" fill="#9f9f9f"/></svg>
</section>
<header aria-label="browser">
<div style="left:0px;top:0px;width:2560px;height:80px;background:#0d3562;"></div>
<div style="left:0px;top:60px;width:2560px;height:70px;background:#15539b;border-radius:11px 11px 0 0;"></div>
<div style="left:0px;top:129px;width:2560px;height:2px;background:#4a7dbd;"></div>
<div style="left:0px;top:129px;width:2560px;height:1px;background:#2c66ad;"></div>
<div style="left:9px;top:9px;width:42px;height:42px;background:#15539b;border-radius:14px;"></div>
<svg style="left:20px;top:20px;" width="20" height="20" viewBox="0 0 20 20" aria-hidden="true"><path d="M4.500 7.300L10 12.800L15.500 7.300" stroke="#fff" stroke-width="2.500" fill="none"/></svg>
<svg style="left:73px;top:19px;" width="22" height="22" viewBox="0 0 22 22" aria-hidden="true"><circle cx="11" cy="11" r="10.500" fill="#9ca2ad"/><circle cx="11" cy="11" r="8.500" fill="#0d3562"/><g transform="translate(11 11)" fill="#9ca2ad"><path d="M0.800 -8.460C-0.500 -6.500 -2.200 -5 -1.900 -3.300C-1.700 -2 0 -2 1.500 -1.800C2.500 -1.500 2.500 0.300 4.400 0.500C6 0.700 7 0.200 8.500 -0.300A8.500 8.500 0 0 0 0.800 -8.460Z"/><path d="M-8.500 -0.300L-2 -0.200C0 0 1.200 1.500 0.600 2.800C0 4 -2.500 4.200 -2.300 5.600C-2.200 6.500 -2.200 7.500 -2.200 8.200A8.500 8.500 0 0 1 -8.500 -0.300Z"/></g></svg>
<span class="t" style="left:108.00px;top:23.00px;font-size:18.5px;color:#fff;transform:scaleX(0.9543);transform-origin:0 50%;-webkit-text-stroke:0.22px #fff;">Create Project - Eyetech Admin</span>
<svg style="left:373.5px;top:20px;" width="20" height="20" viewBox="0 0 20 20" aria-hidden="true"><path d="M4.7 4.7L15.3 15.3M15.3 4.7L4.7 15.3" stroke="#fff" stroke-width="2.3" fill="none"/></svg>
<div style="left:411px;top:18px;width:3px;height:24px;background:#1b58a3;border-radius:2px;"></div>
<svg style="left:430px;top:19px;" width="22" height="22" viewBox="0 0 22 22" aria-hidden="true"><circle cx="11" cy="11" r="10.500" fill="#9ca2ad"/><circle cx="11" cy="11" r="8.500" fill="#0d3562"/><g transform="translate(11 11)" fill="#9ca2ad"><path d="M0.800 -8.460C-0.500 -6.500 -2.200 -5 -1.900 -3.300C-1.700 -2 0 -2 1.500 -1.800C2.500 -1.500 2.500 0.300 4.400 0.500C6 0.700 7 0.200 8.500 -0.300A8.500 8.500 0 0 0 0.800 -8.460Z"/><path d="M-8.500 -0.300L-2 -0.200C0 0 1.200 1.500 0.600 2.800C0 4 -2.500 4.200 -2.300 5.600C-2.200 6.500 -2.200 7.500 -2.200 8.200A8.500 8.500 0 0 1 -8.500 -0.300Z"/></g></svg>
<span class="t" style="left:465.30px;top:23.00px;font-size:18.5px;color:#fff;transform:scaleX(0.9177);transform-origin:0 50%;-webkit-text-stroke:0.22px #fff;padding-bottom:8px;-webkit-mask-image:linear-gradient(90deg,#000 0,#000 86%,transparent 99%);">eyetech.services/relink_storage.p</span>
<svg style="left:731px;top:20px;" width="20" height="20" viewBox="0 0 20 20" aria-hidden="true"><path d="M4.7 4.7L15.3 15.3M15.3 4.7L4.7 15.3" stroke="#fff" stroke-width="2.3" fill="none"/></svg>
<div style="left:768px;top:18px;width:3px;height:24px;background:#1b58a3;border-radius:2px;"></div>
<svg style="left:786.5px;top:19px;" width="22" height="22" viewBox="0 0 22 22" aria-hidden="true"><circle cx="11" cy="11" r="10.500" fill="#9ca2ad"/><circle cx="11" cy="11" r="8.500" fill="#0d3562"/><g transform="translate(11 11)" fill="#9ca2ad"><path d="M0.800 -8.460C-0.500 -6.500 -2.200 -5 -1.900 -3.300C-1.700 -2 0 -2 1.500 -1.800C2.500 -1.500 2.500 0.300 4.400 0.500C6 0.700 7 0.200 8.500 -0.300A8.500 8.500 0 0 0 0.800 -8.460Z"/><path d="M-8.500 -0.300L-2 -0.200C0 0 1.200 1.500 0.600 2.800C0 4 -2.500 4.200 -2.300 5.600C-2.200 6.500 -2.200 7.500 -2.200 8.200A8.500 8.500 0 0 1 -8.500 -0.300Z"/></g></svg>
<span class="t" style="left:821.06px;top:23.00px;font-size:18.5px;color:#fff;transform:scaleX(0.9395);transform-origin:0 50%;-webkit-text-stroke:0.22px #fff;">Projects | Eyetech IT Solutions</span>
<svg style="left:1087.5px;top:20px;" width="20" height="20" viewBox="0 0 20 20" aria-hidden="true"><path d="M4.7 4.7L15.3 15.3M15.3 4.7L4.7 15.3" stroke="#fff" stroke-width="2.3" fill="none"/></svg>
<svg style="left:1117px;top:9px;" width="378" height="53" viewBox="0 0 378 53" aria-hidden="true"><path d="M0 51.500C8.500 51.500 14 46 14 37.500V13C14 5.500 19.500 0 27 0H349C356.500 0 362 5.500 362 13V37.500C362 46 367.500 51.500 376 51.500V54H0Z" fill="#15539b"/></svg>
<svg style="left:1143px;top:18px;" width="24" height="24" viewBox="0 0 24 24" aria-hidden="true"><rect width="24" height="24" fill="#fff"/><circle cx="12" cy="12" r="10.600" fill="none" stroke="#8d90b4" stroke-width=".9" stroke-dasharray="1.200 .8"/><path d="M3.300 15.500A9.300 9.300 0 0 1 20.700 15.500" fill="none" stroke="#d7465c" stroke-width="1.700" stroke-dasharray="1.300 .9"/><ellipse cx="12" cy="6.800" rx="2.300" ry="2.100" fill="#d2122e"/><path d="M10.600 8.300h2.800l.8 3h-4.400z" fill="#a8325a"/><rect x="5.400" y="11.100" width="13.300" height="4.800" rx=".5" fill="#4c4a82"/><rect x="6.400" y="12" width="4.600" height="2.600" fill="#e3a7bd"/><rect x="13" y="12" width="4.600" height="2.600" fill="#e3a7bd"/><rect x="11.300" y="11.300" width="1.400" height="4.200" fill="#c93a5e"/><rect x="11.500" y="16" width="1" height="2.600" fill="#b0304f"/><rect x="7.700" y="19.600" width="8.600" height="1.100" fill="#8d90b4"/></svg>
<span class="t" style="left:1179.00px;top:23.00px;font-size:18.5px;color:#fff;transform:scaleX(0.9635);transform-origin:0 50%;-webkit-text-stroke:0.22px #fff;">Admin Panel</span>
<svg style="left:1445px;top:20px;" width="20" height="20" viewBox="0 0 20 20" aria-hidden="true"><path d="M4.7 4.7L15.3 15.3M15.3 4.7L4.7 15.3" stroke="#fff" stroke-width="2.3" fill="none"/></svg>
<svg style="left:1499px;top:20px;" width="20" height="20" viewBox="0 0 20 20" aria-hidden="true"><path d="M10 2.200V17.800M2.200 10H17.800" stroke="#fff" stroke-width="2.400" fill="none"/></svg>
<div style="left:2381px;top:27.5px;width:15.5px;height:2px;background:#fff;"></div>
<svg style="left:2448px;top:20px;" width="20" height="20" viewBox="0 0 20 20" aria-hidden="true"><rect x="2.200" y="5.200" width="10.600" height="10.600" rx="2.600" fill="none" stroke="#fff" stroke-width="1.700"/><path d="M5.600 2.900H12.600A4.400 4.400 0 0 1 17 7.300V12.600" fill="none" stroke="#fff" stroke-width="1.700"/></svg>
<svg style="left:2516px;top:19px;" width="22" height="22" viewBox="0 0 22 22" aria-hidden="true"><path d="M3.300 3.300L18.700 18.700M18.700 3.300L3.300 18.700" stroke="#fff" stroke-width="1.700" fill="none"/></svg>
<svg style="left:21px;top:83px;" width="24" height="24" viewBox="0 0 24 24" aria-hidden="true"><path d="M21 12H4.500M12 4L4 12L12 20" stroke="#fff" stroke-width="2.200" fill="none"/></svg>
<svg style="left:75px;top:83px;" width="24" height="24" viewBox="0 0 24 24" aria-hidden="true"><path d="M3 12H19.500M12 4L20 12L12 20" stroke="#6f9bd3" stroke-width="2.200" fill="none"/></svg>
<svg style="left:129px;top:83px;" width="24" height="24" viewBox="0 0 24 24" aria-hidden="true"><path d="M19.600 10.500A8 8 0 1 0 19.800 14.200" stroke="#fff" stroke-width="2.200" fill="none"/><path d="M20.800 3.800V10.800H13.800Z" fill="#fff"/></svg>
<div style="left:180px;top:69px;width:2254px;height:51px;background:#1a4578;border-radius:26px;"></div>
<div style="left:187.5px;top:77px;width:36px;height:36px;background:#15539b;border-radius:50%;"></div>
<svg style="left:193px;top:83px;" width="24" height="24" viewBox="0 0 24 24" aria-hidden="true"><circle cx="7.300" cy="7.600" r="2.500" fill="none" stroke="#fff" stroke-width="1.900"/><path d="M13 7.600H21.500" stroke="#fff" stroke-width="1.900"/><circle cx="17.300" cy="16.800" r="2.500" fill="none" stroke="#fff" stroke-width="1.900"/><path d="M3.500 16.800H12" stroke="#fff" stroke-width="1.900"/></svg>
<span class="t" style="left:235.60px;top:85.00px;font-size:20px;color:#fff;transform:scaleX(1.0338);transform-origin:0 50%;-webkit-text-stroke:0.22px #fff;">acf.edu.ph</span>
<span class="t" style="left:331.00px;top:85.00px;font-size:20px;color:#b4c3d8;transform:scaleX(1.0831);transform-origin:0 50%;-webkit-text-stroke:0.22px #b4c3d8;">/enrolled/students</span>
<svg style="left:2386.7px;top:82.7px;" width="24.5" height="24.5" viewBox="0 0 26 26" aria-hidden="true"><path d="M13 2.800L16 9.700L23.500 10.400L17.800 15.300L19.500 22.600L13 18.700L6.500 22.600L8.200 15.300L2.500 10.400L10 9.700Z" fill="none" stroke="#c4c7cf" stroke-width="2.100" stroke-linejoin="miter"/></svg>
<svg style="left:2458.5px;top:80px;" width="30" height="30" viewBox="0 0 30 30" aria-hidden="true"><defs><clipPath id="pa"><circle cx="15" cy="15" r="15"/></clipPath></defs><g clip-path="url(#pa)"><rect width="30" height="30" fill="#b98a7c"/><rect x="0" y="0" width="30" height="30" fill="#9c6a5e" opacity=".5"/><path d="M4 0v18M8 0v18M22 0v18M26 0v18" stroke="#d6aea2" stroke-width="1.500"/><ellipse cx="15" cy="10.500" rx="4.300" ry="5.200" fill="#e6b9a1"/><path d="M9.800 9.500C9 3.500 13 2 16 3c3-.500 5 2 4.300 6.200C19 6.500 13 5.500 9.800 9.500Z" fill="#2a2320"/><path d="M1 30C2 21 8 17.500 15 17.500S28 21 29 30Z" fill="#c9cdc6"/><path d="M13 24c1-3 3-5 5-5.500l1.500 4L17 28Z" fill="#d9996f"/></g></svg>
<svg style="left:2522px;top:82px;" width="12" height="26" viewBox="0 0 12 26" aria-hidden="true"><circle cx="6" cy="4.700" r="2.400" fill="#fff"/><circle cx="6" cy="13.200" r="2.400" fill="#fff"/><circle cx="6" cy="21.500" r="2.400" fill="#fff"/></svg>
</header>
<footer aria-label="taskbar">
<div style="left:0px;top:1368px;width:2560px;height:72px;background:#262626;"></div>
<div style="left:0px;top:1368px;width:2560px;height:1.8px;background:#474747;"></div>
<svg style="left:26px;top:1374px;" width="48" height="50" viewBox="0 0 48 50" aria-hidden="true"><defs><linearGradient id="cl" x1="0" y1="0" x2="0" y2="1"><stop offset="0" stop-color="#8fb4ee"/><stop offset=".55" stop-color="#cfe0f8"/><stop offset="1" stop-color="#9cc0f2"/></linearGradient></defs><circle cx="31" cy="27.500" r="5.500" fill="#f08a1c"/><path d="M9 45.500C5 45.500 3 43 3 40c0-3 2.500-5.500 6-5.500 1-5.500 5-9.500 10.500-9.500 5 0 8.500 3 9.800 7.500C34.500 32 39 35 39 39.500c0 3.500-2.500 6-6 6Z" fill="url(#cl)"/><circle cx="31.500" cy="15" r="12" fill="#ff8c9e"/></svg>
<span class="t" style="left:53.20px;top:1382.00px;font-size:16px;color:#111;-webkit-text-stroke:0.22px #111;">8</span>
<span class="t" style="left:76.50px;top:1384.00px;font-size:17.5px;color:#fff;transform:scaleX(0.9567);transform-origin:0 50%;-webkit-text-stroke:0.22px #fff;">30°C</span>
<span class="t" style="left:75.46px;top:1407.00px;font-size:18px;color:#d2d2d2;transform:scaleX(1.0413);transform-origin:0 50%;-webkit-text-stroke:0.22px #d2d2d2;">Mostly cloudy</span>
<svg style="left:666px;top:1387px;" width="35" height="35" viewBox="0 0 35 35" aria-hidden="true"><defs><linearGradient id="wg" x1="0" y1="0" x2="1" y2="1"><stop offset="0" stop-color="#6ee3ff"/><stop offset="1" stop-color="#1597ff"/></linearGradient></defs><path d="M0 0H16.500V16.500H0ZM18.500 0H35V16.500H18.500ZM0 18.500H16.500V35H0ZM18.500 18.500H35V35H18.500Z" fill="url(#wg)"/></svg>
<div style="left:721px;top:1380px;width:330px;height:48px;background:#424242;border-radius:24px;border:1px solid #565656;box-sizing:border-box;"></div>
<svg style="left:736px;top:1390px;" width="28" height="28" viewBox="0 0 28 28" aria-hidden="true"><circle cx="12" cy="12.300" r="8.300" fill="#555" stroke="#e8e8e8" stroke-width="2"/><path d="M18 18.500L24 24.500" stroke="#e8e8e8" stroke-width="2.600" stroke-linecap="round"/></svg>
<span class="t" style="left:777.50px;top:1394.00px;font-size:21px;color:#dedede;transform:scaleX(0.9186);transform-origin:0 50%;-webkit-text-stroke:0.22px #dedede;">Search</span>
<div style="left:1069px;top:1396px;width:27px;height:24.5px;background:#5b5b5b;border-radius:3px;"></div>
<div style="left:1078px;top:1387px;width:27.5px;height:25px;background:linear-gradient(135deg,#fdfdfd,#bdbdbd);border-radius:3px;"></div>
<svg style="left:1136px;top:1388px;" width="34" height="32" viewBox="0 0 34 32" aria-hidden="true"><defs><linearGradient id="cpl" x1="0" y1="0" x2="0" y2="1"><stop offset="0" stop-color="#1590f5"/><stop offset=".5" stop-color="#3cc56f"/><stop offset=".95" stop-color="#f7d41c"/></linearGradient><linearGradient id="cpr" x1="0" y1="0" x2="0" y2="1"><stop offset="0" stop-color="#a35bf5"/><stop offset=".5" stop-color="#ee4f93"/><stop offset="1" stop-color="#fd9a45"/></linearGradient><linearGradient id="cpt" x1="0" y1="0" x2="1" y2="1"><stop offset="0" stop-color="#0a3dbd"/><stop offset="1" stop-color="#2b74f2"/></linearGradient><linearGradient id="cpb" x1="0" y1="0" x2="1" y2="1"><stop offset="0" stop-color="#e2352b"/><stop offset="1" stop-color="#ff8a3c"/></linearGradient></defs><path d="M19 1H22.500C24.700 1 25.800 2.200 26.300 3.900L27.200 6.900C27.700 8.600 28.700 9.200 30.500 9.200H19.500Z" fill="url(#cpt)"/><path d="M3.500 22.500H14L14.800 31H11.500C9.400 31 8.400 29.800 7.900 28.200L7.100 25C6.600 23.300 5.500 22.500 3.500 22.500Z" fill="url(#cpb)"/><path d="M7.500 1H21.800L13.200 22.500H3.500C1.200 22.500 -0.200 20.800 0.400 18.500L4.200 3.800C4.700 2 5.800 1 7.500 1Z" fill="url(#cpl)"/><path d="M20.900 9.200H30C32.400 9.200 33.800 10.900 33.200 13.200L29.400 28.200C28.900 30 27.800 31 26.100 31H15.100Z" fill="url(#cpr)"/></svg>
<svg style="left:1200.5px;top:1386.5px;" width="36" height="36" viewBox="0 0 36 36" aria-hidden="true"><circle cx="18" cy="18" r="18" fill="#2ba5e0"/><path d="M7.500 17.600L26.500 10.200c.9-.300 1.600.2 1.300 1.500L24.600 26.800c-.2 1-.9 1.300-1.700.8l-4.800-3.600-2.400 2.300c-.3.300-.5.500-1 .5l.4-4.900 9-8.100c.4-.4-.1-.500-.6-.2L12.400 20.600l-4.700-1.500c-1-.3-1-1 .2-1.500z" fill="#fff"/></svg>
<svg style="left:1266px;top:1386px;" width="39" height="36" viewBox="0 0 39 36" aria-hidden="true"><defs><linearGradient id="fx" x1="0" y1="0" x2="1" y2="1"><stop offset="0" stop-color="#ffdb63"/><stop offset="1" stop-color="#f8bd2c"/></linearGradient></defs><path d="M1 3.900C1 2.500 2 1.400 3.500 1.400H12.500L16.500 4.500H35.500C37 4.500 38 5.500 38 7V14H1Z" fill="#e6a60f"/><path d="M1 9C1 7.600 2 6.600 3.400 6.600H13L16.200 4.600H35.600C37 4.600 38 5.600 38 7V32C38 33.500 37 34.500 35.500 34.500H3.500C2 34.500 1 33.500 1 32Z" fill="url(#fx)"/><path d="M7.500 34.500V27C7.500 25.300 8.800 24 10.500 24H28.500C30.200 24 31.500 25.300 31.500 27V34.500Z" fill="#1a7fdc"/><rect x="12" y="28.200" width="15" height="1.700" rx=".85" fill="#0b56ab"/></svg>
<div style="left:1280.7px;top:1428.5px;width:9.2px;height:4.3px;background:#8f8f8f;border-radius:2.200px;"></div>
<svg style="left:1333px;top:1386px;" width="36.5" height="36.5" viewBox="0 0 36.5 36.5" aria-hidden="true"><defs><linearGradient id="eg1" x1="0" y1="0" x2=".6" y2="1"><stop offset="0" stop-color="#2aa7ee"/><stop offset="1" stop-color="#0a6fd2"/></linearGradient><linearGradient id="eg2" x1="0" y1=".3" x2="1" y2=".6"><stop offset="0" stop-color="#2bb5ea"/><stop offset=".55" stop-color="#2fc4c4"/><stop offset="1" stop-color="#72e24a"/></linearGradient><clipPath id="egc"><circle cx="18.200" cy="18.200" r="18.200"/></clipPath></defs><g clip-path="url(#egc)"><rect width="37" height="37" fill="url(#eg1)"/><path d="M11 14C8 20 10 30 20 34.500C26 35.500 31 32 33.600 27.600C30 28.800 26 28.500 23 27C19 25 16 22 17 17C15 15 12.500 14 11 14Z" fill="#0d4f9e"/><path d="M14.700 19C14.700 16.500 16.500 15 18.800 15C21 15 22.600 16.500 22.600 18.300C22.600 19.800 21.200 20.500 21.200 21.600C21.200 23 24 24.400 28 24.400C31.500 24.400 34.500 22.800 36.300 19.500L38 29L33.600 27.700C30 28.900 26 28.600 23 27C19 25 14.700 22.500 14.700 19Z" fill="#262626"/><path d="M0.500 17C2 6 10 0 18.200 0C28 0 36.500 8 36.500 16C36.500 21 32.500 24.500 28 24.500C24 24.500 21 23 21 21.500C21 20 22.700 19 22.700 17C22.700 13 18 9.500 13 9.500C8 9.500 3 12 0.500 17Z" fill="url(#eg2)"/></g></svg>
<svg style="left:1398px;top:1384px;" width="38" height="40" viewBox="0 0 38 40" aria-hidden="true"><defs><linearGradient id="msb" x1="0" y1="0" x2="0" y2="1"><stop offset="0" stop-color="#ffffff"/><stop offset="1" stop-color="#e2e2e2"/></linearGradient></defs><path d="M1 9.800C1 8 2 6.800 4 6.800H33C35 6.800 36 8 36 9.800V32.500C36 36 33.500 38.200 30.500 38.200H6.500C3.500 38.200 1 36 1 32.500Z" fill="url(#msb)"/><path d="M8.900 10V5C8.900 3.800 9.600 3.200 10.700 3.200H26C27.100 3.200 27.800 3.800 27.800 5V10" fill="none" stroke="#22b5ff" stroke-width="2.300"/><rect x="10.850" y="15" width="7.100" height="7.100" fill="#f25022"/><rect x="18.900" y="15" width="7.100" height="7.100" fill="#7fba00"/><rect x="10.850" y="23.050" width="7.100" height="7.100" fill="#00a4ef"/><rect x="18.900" y="23.050" width="7.100" height="7.100" fill="#ffb900"/></svg>
<svg style="left:1465px;top:1386px;" width="36" height="36" viewBox="0 0 36 36" aria-hidden="true"><rect width="36" height="36" rx="5" fill="#ff1523"/><path d="M4.700 10.700H31L22.700 27.600L18.200 18.500L13.700 27.600Z" fill="#fff"/><path d="M9.400 13.800H16.400L13.300 21.200Z" fill="#ff1523"/><path d="M26.400 13.200L21.900 21.400" stroke="#ff1523" stroke-width="1.700"/><path d="M19.600 13.800H22.800L21 18Z" fill="#ff1523"/></svg>
<svg style="left:1533px;top:1385px;" width="33" height="38" viewBox="0 0 33 38" aria-hidden="true"><path d="M7.800 12V11.500A8.200 8.200 0 0 1 24.200 11.500V12" fill="none" stroke="#050505" stroke-width="4.300"/><rect x="3.300" y="11.900" width="25.400" height="22.600" fill="none" stroke="#050505" stroke-width="4.300"/><path d="M8.600 23.800L15.200 29.700L26.900 14.400" fill="none" stroke="#e8192c" stroke-width="3.900"/></svg>
<svg style="left:1599px;top:1385px;" width="32" height="38" viewBox="0 0 32 38" aria-hidden="true"><defs><linearGradient id="bg1" x1="0" y1="0" x2="1" y2="0"><stop offset="0" stop-color="#ff5a00"/><stop offset="1" stop-color="#ff2200"/></linearGradient></defs><path d="M10.500 1H21.500L24 3.800L28.500 3.500L31 8L30 11.300L30.800 14.500L27 27.700L22 33L16 37.100L10 33L5 27.700L1.200 14.500L2 11.300L1 8L3.500 3.500L8 3.800Z" fill="url(#bg1)"/><path d="M4.700 9.750L10.500 7.800L16 9L21.500 7.800L27.300 9.750L28.500 14.400L23.800 23.800L16 29.300L8.200 23.800L3.500 14.400Z" fill="#fff"/><path d="M8.500 11.200L13.200 12.700M23.500 11.200L18.800 12.700" stroke="#ff4a0a" stroke-width="1.500"/><path d="M16 13.500V18.200" stroke="#ff4a0a" stroke-width="1.300"/><path d="M9.500 21.500L16 24.300L22.500 21.500" fill="none" stroke="#ff4a0a" stroke-width="1.700"/><path d="M13 18.500L16 20L19 18.500" fill="none" stroke="#ff4a0a" stroke-width="1.100"/></svg>
<div style="left:1651px;top:1374px;width:60.2px;height:60px;background:#80444c;border-radius:7px;"></div>
<svg style="left:1662.8px;top:1386px;" width="36" height="36" viewBox="0 0 36 36" aria-hidden="true"><circle cx="18" cy="18" r="18" fill="#5865f2"/><path transform="translate(18 18) scale(1.17) translate(-18 -17.600)" d="M25.500 11.300a15 15 0 0 0-3.800-1.200l-.5 1a14 14 0 0 0-4.400 0l-.5-1a15 15 0 0 0-3.800 1.200C10 15 9.400 18.600 9.700 22.200a15 15 0 0 0 4.600 2.300l1-1.600a9 9 0 0 1-1.500-.7l.4-.3a10.800 10.800 0 0 0 9.600 0l.4.3c-.5.300-1 .5-1.500.7l1 1.600a15 15 0 0 0 4.600-2.300c.4-4.200-.7-7.800-2.800-10.900zM15.200 20c-.9 0-1.700-.9-1.700-1.900s.7-1.900 1.700-1.900 1.700.9 1.700 1.900-.8 1.900-1.700 1.900zm5.600 0c-.9 0-1.700-.9-1.700-1.900s.7-1.900 1.700-1.900 1.700.9 1.700 1.900-.7 1.900-1.700 1.900z" fill="#fff"/></svg>
<div style="left:1684.8px;top:1380.7px;width:20.2px;height:20.2px;background:#e8525a;border-radius:50%;"></div>
<span class="t" style="left:1687.30px;top:1384.60px;font-size:13px;color:#fff;font-weight:700;transform:scaleX(1.0177);transform-origin:0 50%;">9+</span>
<div style="left:1657px;top:1428px;width:48px;height:4.5px;background:#ff9eaa;border-radius:3px;"></div>
<svg style="left:1729px;top:1386px;" width="36" height="36" viewBox="0 0 36 36" aria-hidden="true"><defs><clipPath id="cca"><circle cx="18" cy="18" r="18"/></clipPath></defs><g clip-path="url(#cca)"><rect width="36" height="36" fill="#e53f32"/><path d="M18 9.700H42V48H10.190L25.190 22.150L18 18Z" fill="#f9c21a"/><path d="M10.810 22.150L-4.190 -3.850L-6 48H10.190L25.190 22.150L18 18Z" fill="#2c9c49"/></g><circle cx="18" cy="18" r="8.300" fill="#fff"/><circle cx="18" cy="18" r="6.700" fill="#2f7de1"/></svg>
<svg style="left:1749px;top:1378.4px;" width="24" height="24" viewBox="0 0 24 24" aria-hidden="true"><defs><clipPath id="maa"><circle cx="12" cy="12" r="11.900"/></clipPath></defs><g clip-path="url(#maa)"><rect width="24" height="24" fill="#a98479"/><path d="M3 0v12M7 0v12M18 0v12M21.500 0v12" stroke="#c7a79c" stroke-width="1.300"/><ellipse cx="11.500" cy="8.200" rx="3.600" ry="4.300" fill="#e2b49c"/><path d="M7.400 7.300C6.800 2.600 9.800 1.400 12 2c2.600-.4 4.300 1.700 3.700 5C14.800 4.800 10 4.300 7.400 7.300Z" fill="#2a2320"/><path d="M0 24C1 17 5.500 14 12 14s11 3 12 10Z" fill="#cfd0ca"/><path d="M10.500 19c.8-2.400 2.400-4 4-4.400l1.200 3.200-2 4Z" fill="#d9996f"/></g></svg>
<div style="left:1742.8px;top:1428.5px;width:9.2px;height:4.3px;background:#8f8f8f;border-radius:2.200px;"></div>
<div style="left:1783px;top:1374px;width:59.5px;height:60px;background:#343434;border-radius:7px;border:1px solid #414141;box-sizing:border-box;"></div>
<svg style="left:1795px;top:1386px;" width="36" height="36" viewBox="0 0 36 36" aria-hidden="true"><defs><clipPath id="ccb"><circle cx="18" cy="18" r="18"/></clipPath></defs><g clip-path="url(#ccb)"><rect width="36" height="36" fill="#e53f32"/><path d="M18 9.700H42V48H10.190L25.190 22.150L18 18Z" fill="#f9c21a"/><path d="M10.810 22.150L-4.190 -3.850L-6 48H10.190L25.190 22.150L18 18Z" fill="#2c9c49"/></g><circle cx="18" cy="18" r="8.300" fill="#fff"/><circle cx="18" cy="18" r="6.700" fill="#2f7de1"/></svg>
<svg style="left:1814.4px;top:1378.4px;" width="24" height="24" viewBox="0 0 24 24" aria-hidden="true"><defs><clipPath id="mab"><circle cx="12" cy="12" r="11.900"/></clipPath></defs><g clip-path="url(#mab)"><rect width="24" height="24" fill="#a98479"/><path d="M3 0v12M7 0v12M18 0v12M21.500 0v12" stroke="#c7a79c" stroke-width="1.300"/><ellipse cx="11.500" cy="8.200" rx="3.600" ry="4.300" fill="#e2b49c"/><path d="M7.400 7.300C6.800 2.600 9.800 1.400 12 2c2.600-.4 4.300 1.700 3.700 5C14.800 4.800 10 4.300 7.400 7.300Z" fill="#2a2320"/><path d="M0 24C1 17 5.500 14 12 14s11 3 12 10Z" fill="#cfd0ca"/><path d="M10.500 19c.8-2.400 2.400-4 4-4.400l1.200 3.200-2 4Z" fill="#d9996f"/></g></svg>
<div style="left:1800.8px;top:1428.2px;width:24.3px;height:4.6px;background:#f4805f;border-radius:3px;"></div>
<svg style="left:1862px;top:1386.8px;" width="34" height="34" viewBox="0 0 34 34" aria-hidden="true"><circle cx="17" cy="17" r="17" fill="#1ed760"/><path d="M7.500 12.200c6.500-2 13.500-1.500 19.500 1.800" fill="none" stroke="#111" stroke-width="3.200" stroke-linecap="round"/><path d="M8.500 17.500c5.500-1.600 11.500-1 16.500 1.800" fill="none" stroke="#111" stroke-width="2.700" stroke-linecap="round"/><path d="M9.500 22.500c4.500-1.300 9.300-.8 13.500 1.500" fill="none" stroke="#111" stroke-width="2.300" stroke-linecap="round"/></svg>
<div style="left:1874.7px;top:1428.5px;width:9.4px;height:4.3px;background:#8f8f8f;border-radius:2.200px;"></div>
<svg style="left:2223px;top:1396px;" width="20" height="14" viewBox="0 0 20 14" aria-hidden="true"><path d="M2 11L10 3L18 11" fill="none" stroke="#fff" stroke-width="2.200"/></svg>
<svg style="left:2266px;top:1389px;" width="30" height="30" viewBox="0 0 30 30" aria-hidden="true"><path d="M3.500 16A11.500 11.500 0 0 1 24.500 8.500" fill="none" stroke="#fff" stroke-width="1.500"/><path d="M25.500 3.500V9.500H19.500" fill="none" stroke="#fff" stroke-width="1.500"/><path d="M26.500 14A11.500 11.500 0 0 1 5.500 21.500" fill="none" stroke="#fff" stroke-width="1.500"/><path d="M4.500 26.500V20.500H10.500" fill="none" stroke="#fff" stroke-width="1.500"/><circle cx="21" cy="21" r="6.200" fill="#ff9d00"/></svg>
<svg style="left:2315px;top:1391.6px;" width="28" height="22" viewBox="0 0 28 22" aria-hidden="true"><path d="M2.500 8.500A16.500 16.500 0 0 1 25.500 8.500" fill="none" stroke="#fff" stroke-width="2"/><path d="M6.300 12.500A11 11 0 0 1 21.700 12.500" fill="none" stroke="#fff" stroke-width="1.700"/><path d="M10 16.300A5.700 5.700 0 0 1 18 16.300" fill="none" stroke="#fff" stroke-width="1.700"/><circle cx="14" cy="19.300" r="1.900" fill="#fff"/></svg>
<svg style="left:2352px;top:1393px;" width="28" height="24" viewBox="0 0 28 24" aria-hidden="true"><path d="M2 8.500H6L11 3.500V20.500L6 15.500H2Z" fill="none" stroke="#fff" stroke-width="1.600" stroke-linejoin="round"/><path d="M14.500 8.500a5 5 0 0 1 0 7" fill="none" stroke="#fff" stroke-width="1.500"/><path d="M17.800 5.500a9.500 9.500 0 0 1 0 13" fill="none" stroke="#fff" stroke-width="1.500"/><path d="M21 2.500a14 14 0 0 1 0 19" fill="none" stroke="#fff" stroke-width="1.500"/></svg>
<svg style="left:2388px;top:1395px;" width="27" height="18" viewBox="0 0 27 18" aria-hidden="true"><rect x="1.800" y="2.200" width="20.500" height="13.600" rx="3.200" fill="none" stroke="#fff" stroke-width="1.700"/><rect x="4.600" y="5" width="9.500" height="8" rx="1" fill="#fff"/><path d="M23.800 6.500c1.300 0 1.800.8 1.800 2.500s-.5 2.500-1.800 2.500Z" fill="#fff"/></svg>
<span class="t" style="left:2466.25px;top:1384.00px;font-size:17.5px;color:#fff;transform:scaleX(0.9916);transform-origin:0 50%;-webkit-text-stroke:0.22px #fff;">4:13 PM</span>
<span class="t" style="left:2437.94px;top:1408.00px;font-size:17.5px;color:#fff;transform:scaleX(1.0634);transform-origin:0 50%;-webkit-text-stroke:0.22px #fff;">10/23/2025</span>
</footer>
</div></body></html>
